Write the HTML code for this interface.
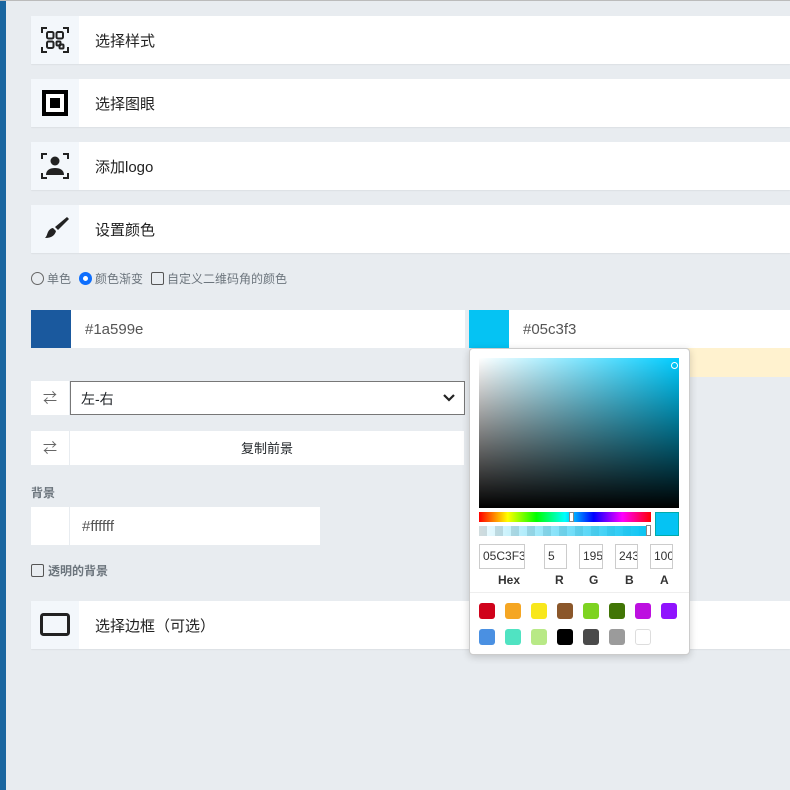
<!DOCTYPE html>
<html><head><meta charset="utf-8"><style>
*{box-sizing:border-box;margin:0;padding:0}
body{width:790px;height:790px;overflow:hidden;background:#e8ecf0;font-family:"Liberation Sans","Noto Sans CJK SC",sans-serif;position:relative;color:#212529}
.abs{position:absolute}
.card{position:absolute;left:31px;width:759px;height:48px;background:#fff;box-shadow:0 1px 1px rgba(0,0,0,.05)}
.card .ic{position:absolute;left:0;top:0;width:48px;height:48px;background:#f3f7fb;display:flex;align-items:center;justify-content:center}
.card .t{position:absolute;left:64px;top:2px;line-height:48px;font-size:15px;color:#222}
.small{font-size:12px;color:#6c757d}
.sw{position:absolute;width:16px;height:16px;border-radius:3px}
.inp{position:absolute;top:544px;height:25px;border:1px solid #ccc;font-size:11px;line-height:23px;color:#333;overflow:hidden;padding-left:3px;background:#fff;white-space:nowrap}
.lbl{position:absolute;top:573px;font-size:12px;font-weight:bold;color:#333}
</style></head><body>
<div class="abs" style="left:0;top:0;width:6px;height:790px;background:#1a66a0"></div>
<div class="abs" style="left:0;top:0;width:790px;height:1px;background:#bbb"></div>

<div class="card" style="top:16px"><div class="ic">
<svg width="30" height="30" viewBox="0 0 30 30" fill="none" stroke="#222" stroke-width="2"><path d="M2 8V3h5M23 3h5v5M28 22v5h-5M7 27H2v-5"/><rect x="7" y="7" width="6.5" height="6.5" rx="1.5"/><rect x="16.5" y="7" width="6.5" height="6.5" rx="1.5"/><rect x="7" y="16.5" width="6.5" height="6.5" rx="1.5"/><rect x="16.5" y="16.5" width="4" height="4" rx="1"/><rect x="19.5" y="19.5" width="4" height="4" rx="1"/></svg>
</div><div class="t">选择样式</div></div>

<div class="card" style="top:79px"><div class="ic">
<svg width="26" height="26" viewBox="0 0 26 26"><rect x="0" y="0" width="26" height="26" fill="#000"/><rect x="4" y="4" width="18" height="18" fill="#fff"/><rect x="8" y="8" width="10" height="10" fill="#000"/></svg>
</div><div class="t">选择图眼</div></div>

<div class="card" style="top:142px"><div class="ic">
<svg width="30" height="30" viewBox="0 0 30 30"><path d="M2 8V3h5M23 3h5v5M28 22v5h-5M7 27H2v-5" fill="none" stroke="#222" stroke-width="2"/><circle cx="15" cy="10" r="4.5" fill="#222"/><path d="M6 24c0-5 4-7 9-7s9 2 9 7z" fill="#222"/></svg>
</div><div class="t">添加logo</div></div>

<div class="card" style="top:205px"><div class="ic">
<svg width="30" height="30" viewBox="0 0 30 30"><path d="M27 3l2 2-11 11-3-3z" fill="#222"/><path d="M13 14l3 3c-1 4-4 7-11 7 2-2 2-4 3-6s3-4 5-4z" fill="#222"/></svg>
</div><div class="t">设置颜色</div></div>

<div class="abs small" style="left:31px;top:270px;display:flex;align-items:center;height:16px">
<span style="width:13px;height:13px;border:1px solid #666;border-radius:50%;display:inline-block;margin-right:3px"></span>单色
<span style="width:13px;height:13px;border:4px solid #0d6efd;border-radius:50%;display:inline-block;margin:0 3px 0 8px;background:#fff"></span>颜色渐变
<span style="width:13px;height:13px;border:1px solid #555;border-radius:2px;display:inline-block;margin:0 3px 0 8px"></span>自定义二维码角的颜色
</div>

<div class="abs" style="left:31px;top:310px;width:40px;height:38px;background:#1a599e"></div>
<div class="abs" style="left:71px;top:310px;width:394px;height:38px;background:#fff;font-size:15px;color:#555;line-height:40px;padding-left:14px">#1a599e</div>
<div class="abs" style="left:469px;top:310px;width:40px;height:38px;background:#05c3f3"></div>
<div class="abs" style="left:509px;top:310px;width:281px;height:38px;background:#fff;font-size:15px;color:#555;line-height:40px;padding-left:14px">#05c3f3</div>
<div class="abs" style="left:509px;top:348px;width:281px;height:29px;background:#fff2cf"></div>

<div class="abs" style="left:31px;top:381px;width:38px;height:34px;background:#fff;text-align:center;line-height:34px;font-size:14px;color:#666">⇄</div>
<div class="abs" style="left:70px;top:381px;width:395px;height:34px;background:#fff;border:1px solid #777;font-size:14px;line-height:34px;padding-left:10px">左-右
<svg class="abs" style="right:8px;top:11px" width="14" height="10" viewBox="0 0 14 10"><path d="M2 2l5 5 5-5" fill="none" stroke="#222" stroke-width="2.2"/></svg></div>

<div class="abs" style="left:31px;top:431px;width:38px;height:34px;background:#fff;text-align:center;line-height:34px;font-size:14px;color:#666">⇄</div>
<div class="abs" style="left:70px;top:431px;width:394px;height:34px;background:#fff;font-size:13px;line-height:35px;text-align:center">复制前景</div>

<div class="abs small" style="left:31px;top:484px;font-weight:bold">背景</div>
<div class="abs" style="left:31px;top:507px;width:38px;height:38px;background:#fff"></div>
<div class="abs" style="left:70px;top:507px;width:250px;height:38px;background:#fff;font-size:15px;color:#555;line-height:40px;padding-left:12px">#ffffff</div>
<div class="abs small" style="left:31px;top:562px;display:flex;align-items:center;font-weight:bold"><span style="width:13px;height:13px;border:1px solid #555;border-radius:2px;display:inline-block;margin-right:4px"></span>透明的背景</div>

<div class="card" style="top:601px"><div class="ic">
<svg width="30" height="24" viewBox="0 0 30 24"><rect x="1.5" y="1.5" width="27" height="20" rx="2" fill="none" stroke="#222" stroke-width="3"/></svg>
</div><div class="t">选择边框（可选）</div></div>

<div class="abs" style="left:469px;top:348px;width:221px;height:307px;background:#fff;border:1px solid #ccc;border-radius:4px;box-shadow:0 2px 8px rgba(0,0,0,.18)"></div>
<div class="abs" style="left:479px;top:358px;width:200px;height:150px;background:linear-gradient(to top,#000,transparent),linear-gradient(to right,#fff,#00ccff)"></div>
<div class="abs" style="left:671px;top:362px;width:7px;height:7px;border:1.5px solid #fff;border-radius:50%"></div>
<div class="abs" style="left:479px;top:512px;width:172px;height:10px;background:linear-gradient(to right,red,#ff0,lime,cyan,blue,#f0f,red)"></div>
<div class="abs" style="left:569px;top:512px;width:5px;height:10px;background:#fff;border:1px solid #888"></div>
<div class="abs" style="left:479px;top:526px;width:172px;height:10px;background:linear-gradient(to right,rgba(5,195,243,0.05),#05c3f3),repeating-linear-gradient(90deg,#ddd 0 8px,#fff 8px 16px)"></div>
<div class="abs" style="left:646px;top:525px;width:5px;height:11px;background:#fff;border:1px solid #888"></div>
<div class="abs" style="left:655px;top:512px;width:24px;height:24px;background:#05c3f3;border:1px solid #0aa"></div>
<div class="inp" style="left:479px;width:46px;font-size:12px">05C3F3</div>
<div class="inp" style="left:544px;width:23px;font-size:12px">5</div>
<div class="inp" style="left:579px;width:24px;font-size:12px">195</div>
<div class="inp" style="left:615px;width:23px;font-size:12px">243</div>
<div class="inp" style="left:650px;width:23px;font-size:12px">100</div>
<div class="lbl" style="left:498px">Hex</div>
<div class="lbl" style="left:555px">R</div>
<div class="lbl" style="left:589px">G</div>
<div class="lbl" style="left:625px">B</div>
<div class="lbl" style="left:660px">A</div>
<div class="abs" style="left:470px;top:592px;width:219px;height:1px;background:#eee"></div>
<div class="sw" style="left:479px;top:603px;background:#d0021b"></div>
<div class="sw" style="left:505px;top:603px;background:#f5a623"></div>
<div class="sw" style="left:531px;top:603px;background:#f8e71c"></div>
<div class="sw" style="left:557px;top:603px;background:#8b572a"></div>
<div class="sw" style="left:583px;top:603px;background:#7ed321"></div>
<div class="sw" style="left:609px;top:603px;background:#417505"></div>
<div class="sw" style="left:635px;top:603px;background:#bd10e0"></div>
<div class="sw" style="left:661px;top:603px;background:#9013fe"></div>
<div class="sw" style="left:479px;top:629px;background:#4a90e2"></div>
<div class="sw" style="left:505px;top:629px;background:#50e3c2"></div>
<div class="sw" style="left:531px;top:629px;background:#b8e986"></div>
<div class="sw" style="left:557px;top:629px;background:#000"></div>
<div class="sw" style="left:583px;top:629px;background:#4a4a4a"></div>
<div class="sw" style="left:609px;top:629px;background:#9b9b9b"></div>
<div class="sw" style="left:635px;top:629px;background:#fff;border:1px solid #ddd"></div>
</body></html>
